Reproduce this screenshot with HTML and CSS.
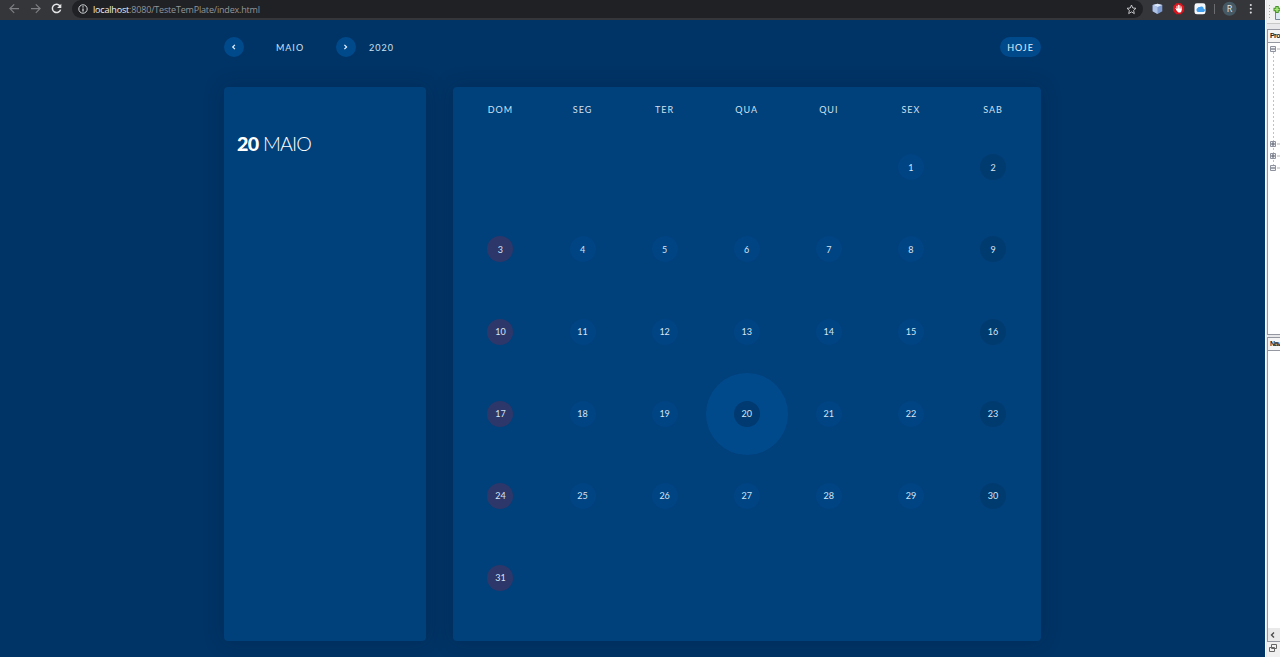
FILE: index.html
```html
<!DOCTYPE html>
<html lang="pt-BR">
<head>
<meta charset="utf-8">
<title>Calendário</title>
<link rel="stylesheet" href="styles.css">
</head>
<body>
<div class="screen">
  <div class="browser">
    <header class="chrome">
      <svg class="nav-icons" width="72" height="20" viewBox="0 0 72 20" fill="none">
        <path d="M19 8.600H10M14.200 4.300L9.900 8.600l4.300 4.300" stroke="#7d7f82" stroke-width="1.200"/>
        <path d="M31 8.600h9M35.800 4.300l4.300 4.300-4.300 4.300" stroke="#7d7f82" stroke-width="1.200"/>
        <path d="M60.100 6.100A4.200 4.200 0 1 0 60.600 9.600" stroke="#e4e5e7" stroke-width="1.500"/>
        <path d="M61.300 3.800v4.100h-4.200z" fill="#e4e5e7"/>
      </svg>
      <div class="omnibox">
        <svg class="info" width="10" height="10" viewBox="0 0 10 10"><circle cx="5" cy="5" r="4.200" fill="none" stroke="#d3d5d8"/><path d="M5 4.400v3.100M5 2.300v1.200" stroke="#e4e5e7" stroke-width="1.200"/></svg>
        <span class="url"><b>localhost</b>:8080/TesteTemPlate/index.html</span>
        <svg class="star" width="11" height="11" viewBox="0 0 11 11"><path d="M5.500 1l1.300 3 3.200.3-2.400 2.100.7 3.200-2.800-1.700-2.800 1.700.7-3.200L1 4.300l3.200-.3z" fill="none" stroke="#d0d2d5" stroke-width=".9"/></svg>
      </div>
      <svg class="extensions" width="122" height="20" viewBox="0 0 122 20">
        <path d="M14.500 3.800l4.800 1.300v6.100l-4.800 2.900-4.800-2.900V5.100z" fill="#7d9bd0"/>
        <path d="M14.500 3.800l4.800 1.300-4.800 1.800-4.800-1.800z" fill="#dce7f8"/>
        <path d="M9.700 5.100l4.800 1.800v7.200l-4.800-2.900z" fill="#aec3e6"/>
        <path d="M33.300 3.300h4.600l3.200 3.200v4.600l-3.200 3.200h-4.600l-3.200-3.200V6.500z" fill="#d9141c"/>
        <path d="M34 9V6.200M35.400 9V5.200M36.800 9V5.600M38.100 9.500V6.800M32.900 8.700l1.600 2" stroke="#fff" stroke-linecap="round"/>
        <path d="M33.700 8.500h4.900v1.700c0 1.600-.9 2.400-2.200 2.400s-2.100-1-2.700-2.400z" fill="#fff"/>
        <rect x="51.500" y="3.300" width="11" height="11" rx="2.400" fill="#f5f8fb"/>
        <path d="M54.700 12a2.200 2.200 0 0 1-.1-3.900 1.700 1.700 0 0 1 2-1.100 2.500 2.500 0 0 1 4.100 1.700 1.700 1.700 0 0 1 0 3.300z" fill="#3f9eed"/>
        <path d="M71.500 4v10" stroke="#6b6d70"/>
        <circle cx="86.500" cy="8.700" r="7" fill="#455a64"/>
        <text x="86.500" y="11.600" text-anchor="middle" class="avatar-letter">R</text>
        <g fill="#dadce0"><circle cx="107.800" cy="5" r="1.050"/><circle cx="107.800" cy="8.800" r="1.050"/><circle cx="107.800" cy="12.600" r="1.050"/></g>
      </svg>
    </header>
    <main class="page">
      <nav class="toolbar">
        <button class="arrow"><svg width="20" height="20" viewBox="0 0 20 20"><path d="M10.900 7.800L8.700 10l2.200 2.200"/></svg></button>
        <span class="month">MAIO</span>
        <button class="arrow"><svg width="20" height="20" viewBox="0 0 20 20"><path d="M8.400 7.800l2.200 2.200-2.200 2.200"/></svg></button>
        <span class="year">2020</span>
        <button class="today-button">HOJE</button>
      </nav>
      <div class="panels">
        <aside class="panel summary"><h1><b>20</b> MAIO</h1></aside>
        <section class="panel calendar">
          <div class="weekdays"><span>DOM</span><span>SEG</span><span>TER</span><span>QUA</span><span>QUI</span><span>SEX</span><span>SAB</span></div>
          <div class="days">
            <div class="day first"><span>1</span></div><div class="day sat"><span>2</span></div>
            <div class="day sun"><span>3</span></div><div class="day"><span>4</span></div><div class="day"><span>5</span></div><div class="day"><span>6</span></div><div class="day"><span>7</span></div><div class="day"><span>8</span></div><div class="day sat"><span>9</span></div>
            <div class="day sun"><span>10</span></div><div class="day"><span>11</span></div><div class="day"><span>12</span></div><div class="day"><span>13</span></div><div class="day"><span>14</span></div><div class="day"><span>15</span></div><div class="day sat"><span>16</span></div>
            <div class="day sun"><span>17</span></div><div class="day"><span>18</span></div><div class="day"><span>19</span></div><div class="day current"><span>20</span></div><div class="day"><span>21</span></div><div class="day"><span>22</span></div><div class="day sat"><span>23</span></div>
            <div class="day sun"><span>24</span></div><div class="day"><span>25</span></div><div class="day"><span>26</span></div><div class="day"><span>27</span></div><div class="day"><span>28</span></div><div class="day"><span>29</span></div><div class="day sat"><span>30</span></div>
            <div class="day sun"><span>31</span></div>
          </div>
        </section>
      </div>
    </main>
  </div>
  <aside class="ide">
    <div class="ide-toolbar">
      <svg width="13" height="24" viewBox="0 0 13 24"><path d="M2.500 5v15" stroke="#b5a9a9" stroke-dasharray="1 2"/><path d="M8.500 10h6v9.500h-6z" fill="#dce9f5" stroke="#718798"/><path d="M6.500 9.500h7M10 6v7" stroke="#479129" stroke-width="3.400"/><path d="M7.500 9.500h5M10 7v5" stroke="#a7e879" stroke-width="1.500"/></svg>
    </div>
    <div class="ide-pane projects">
      <div class="ide-title">Pro</div>
      <svg class="tree" width="13" height="290" viewBox="0 0 13 290" fill="none">
        <path d="M5.500 9v116" stroke="#c5c0c5" stroke-dasharray="2 2"/>
        <path d="M9 6h4M9 101h4M9 113h4M9 125h4" stroke="#b5b5b8"/>
        <path d="M2.500 3.500h5v5h-5zM2.500 98.500h5v5h-5zM2.500 110.500h5v5h-5zM2.500 122.500h5v5h-5z" fill="#f2f3f6" stroke="#8e929d"/>
        <path d="M3 6h4M3 101h4M5 99v4M3 113h4M5 111v4M3 125h4" stroke="#555a69"/>
      </svg>
    </div>
    <div class="ide-pane navigator">
      <div class="ide-title">Nav</div>
      <div class="ide-scroll"><svg width="10" height="10" viewBox="0 0 10 10"><path d="M6 2.500L3.500 5 6 7.500" fill="none" stroke="#4c4c4c" stroke-width="1.400"/></svg></div>
    </div>
    <div class="ide-foot"><svg width="11" height="11" viewBox="0 0 11 11" fill="#f2f2f2" stroke="#666"><path d="M3.500 1.500h5v4h-5zM1.500 4.500h5v4h-5z"/></svg></div>
  </aside>
</div>
</body>
</html>
```
FILE: styles.css
```css
* { box-sizing: border-box; }
body { margin: 0; overflow: hidden; font-family: Lato, "Liberation Sans", sans-serif; }
svg { display: block; flex: none; }
.screen { display: flex; width: 1280px; height: 657px; overflow: hidden; }
.browser { width: 1265px; flex: none; }

.chrome { display: flex; height: 20px; background: #35363a; }
.omnibox { display: flex; align-items: center; width: 1071px; height: 18px; padding: 0 6px; border-radius: 9px; background: #202124; }
.url { margin-left: 5px; color: #92959a; font: 9px/17px "Open Sans", sans-serif; letter-spacing: -.18px; }
.url b { color: #f0f1f2; font-weight: 400; }
.star { margin-left: auto; }
.avatar-letter { font: 9px "Open Sans", sans-serif; fill: #e1e6e8; }

.page { height: 637px; padding: 17px 224px 0; background: #003466; }
.toolbar { display: flex; align-items: center; height: 20px; color: #d0e0f0; font-size: 9px; letter-spacing: 1px; }
.toolbar button { border: 0; padding: 0; color: #e0effc; background: #004a8c; font: inherit; letter-spacing: 1px; }
.arrow { width: 20px; height: 20px; border-radius: 50%; }
.arrow path { fill: none; stroke: #e7f3ff; stroke-width: 1.2; }
.month { width: 92px; text-align: center; }
.year { margin-left: 13px; }
.toolbar .today-button { width: 41px; height: 20px; margin-left: auto; border-radius: 10px; }

.panels { display: flex; gap: 27px; padding-top: 30px; }
.panel { height: 554px; border-radius: 4px; background: #00407b; box-shadow: 0 0 20px rgba(0, 20, 50, .25); }
.summary { width: 202px; padding: 46px 13px; }
.summary h1 { margin: 0; color: #fff; font-size: 19.7px; font-weight: 300; line-height: 22px; letter-spacing: -.85px; }
.summary b { font-weight: 900; letter-spacing: -.7px; }
.calendar { width: 588px; padding: 0 6.4px; }
.weekdays { display: grid; grid-template-columns: repeat(7, 82.1px); height: 39.3px; padding-top: 17px; color: #d0e0f0; font-size: 9px; line-height: 12px; letter-spacing: 1px; text-align: center; }
.days { display: grid; grid-template-columns: repeat(7, 82.1px); grid-auto-rows: 82.1px; }
.day { display: grid; place-items: center; border-radius: 50%; }
.day span { display: grid; place-items: center; width: 26px; height: 26px; border-radius: 50%; color: #d5e5f4; background: #004483; font-size: 9px; }
.day.first { grid-column: 6; }
.day.sat span { background: #003b70; }
.day.sun span { background: #2d3769; }
.day.current { background: #004a8c; }
.day.current span { background: #003a70; }

.ide { width: 15px; flex: none; overflow: hidden; padding-left: 1px; background: #e8e8ea; border-left: 1px solid #f8f8f8; }
.ide-toolbar { height: 24px; background: #f1f1f1; border-bottom: 1px solid #c8c8c8; }
.ide-pane { border: 1px solid #9597a1; border-right: 0; background: #fff; overflow: hidden; }
.projects { height: 306px; margin-top: 5px; }
.navigator { display: flex; flex-direction: column; height: 305px; margin-top: 2px; }
.ide-title { flex: none; height: 13px; padding-left: 2px; border-bottom: 1px solid #9597a1; background: #f5f5f5; color: #222; font: 700 7px/12px "Liberation Sans", sans-serif; letter-spacing: -.9px; }
.projects .ide-title { letter-spacing: -.6px; }
.ide-scroll { display: flex; align-items: center; height: 13px; margin-top: auto; background: #e9e9e9; }
.ide-foot { padding: 1px 0 0 1px; height: 15px; background: #f0f0f0; }
```
